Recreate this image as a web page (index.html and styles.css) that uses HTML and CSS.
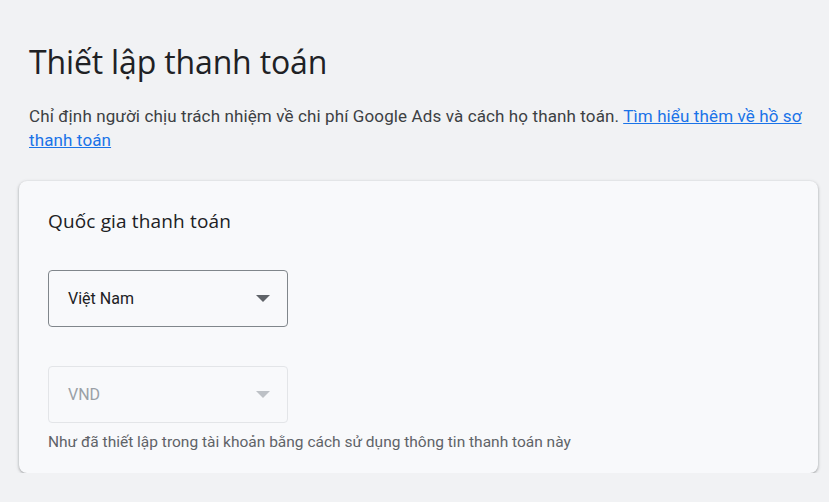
FILE: index.html
```html
<!DOCTYPE html>
<html lang="vi">
<head>
<meta charset="utf-8">
<link rel="stylesheet" href="styles.css">
</head>
<body>
<div class="page">
  <h1 class="title">Thiết lập thanh toán</h1>
  <p class="desc">Chỉ định người chịu trách nhiệm về chi phí Google Ads và cách họ thanh toán. <a class="link" href="#">Tìm hiểu thêm về hồ sơ thanh toán</a></p>
  <div class="card">
    <h2 class="card-title">Quốc gia thanh toán</h2>
    <div class="select">
      <span class="select-value">Việt Nam</span>
      <svg class="arrow" width="14" height="7" viewBox="0 0 14 7"><path d="M0 0 L14 0 L7 7 Z" fill="#5f6368"/></svg>
    </div>
    <div class="select disabled">
      <span class="select-value">VND</span>
      <svg class="arrow" width="14" height="7" viewBox="0 0 14 7"><path d="M0 0 L14 0 L7 7 Z" fill="#bdc1c6"/></svg>
    </div>
    <p class="hint">Như đã thiết lập trong tài khoản bằng cách sử dụng thông tin thanh toán này</p>
  </div>
</div>
</body>
</html>
```
FILE: styles.css
```css
html, body {
  margin: 0;
  padding: 0;
  background: #f1f2f4;
  font-family: Roboto, "Liberation Sans", Arial, sans-serif;
  color: #202124;
}
.page {
  padding: 38px 11px 0 19px;
}
.title {
  margin: 0 0 0 10px;
  font-family: "Open Sans", Roboto, sans-serif;
  font-weight: 400;
  font-size: 32px;
  line-height: 48px;
  color: #202124;
  letter-spacing: -0.15px;
}
.desc {
  margin: 18px 0 0 10px;
  font-size: 17px;
  letter-spacing: 0.12px;
  line-height: 24px;
  color: #3c4043;
}
.link {
  color: #1a73e8;
  text-decoration: underline;
}
.card {
  margin-top: 29px;
  width: 799px;
  box-sizing: border-box;
  background: #f8f9fb;
  border-radius: 8px;
  box-shadow: 0 1px 2px rgba(60,64,67,0.3), 0 1px 3px 1px rgba(60,64,67,0.15);
  padding: 26px 29px 19px 29px;
}
.card-title {
  margin: 0;
  font-family: "Open Sans", Roboto, sans-serif;
  font-weight: 500;
  font-size: 19px;
  letter-spacing: 0.15px;
  line-height: 28px;
  color: #202124;
}
.select {
  margin-top: 35px;
  width: 240px;
  height: 57px;
  box-sizing: border-box;
  border: 1px solid #80868b;
  border-radius: 4px;
  display: flex;
  align-items: center;
  justify-content: space-between;
  padding: 0 17px 0 19px;
}
.select-value {
  font-size: 16px;
  color: #202124;
}
.select.disabled {
  margin-top: 39px;
  border-color: #e3e5e8;
}
.select.disabled .select-value {
  color: #9aa0a6;
}
.hint {
  margin: 7px 0 0 0;
  font-size: 15.5px;
  line-height: 24px;
  color: #5f6368;
}
```
